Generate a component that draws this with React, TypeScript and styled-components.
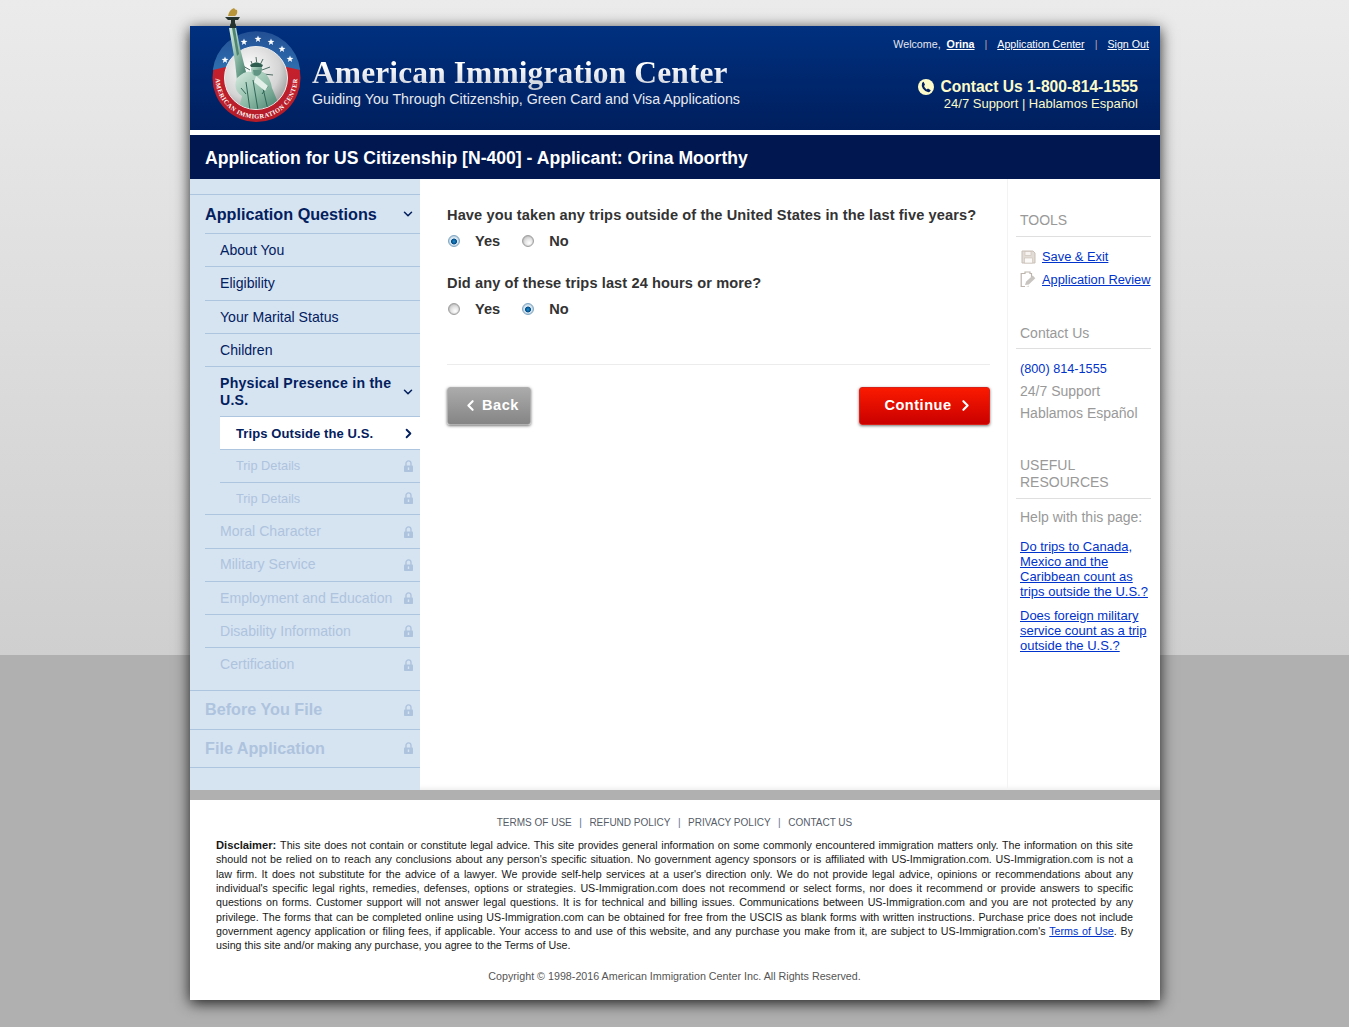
import React from "react";
import styled, { createGlobalStyle } from "styled-components";
import { ChevronDown, ChevronRight, ChevronLeft } from "lucide-react";

const Global = createGlobalStyle`
  html, body { margin: 0; padding: 0; }
  body {
    min-height: 1027px;
    font-family: "Liberation Sans", Arial, sans-serif;
    background: linear-gradient(to bottom, #ebebeb 0, #cfcfcf 655px, #b0b0b0 655px, #b0b0b0 100%);
  }
`;

const Page = styled.div`
  width: 970px;
  margin-left: 190px;
  padding-top: 26px;
`;
const Sheet = styled.div`
  box-shadow: 0 3px 14px rgba(0, 0, 0, 0.85);
`;
const Header = styled.header`
  height: 104px;
  display: flex;
  background: linear-gradient(to bottom, #00307f 0, #001f5e 100%);
  border-bottom: 5px solid #fff;
`;
const LogoBox = styled.div`
  width: 122px;
  flex: none;
  position: relative;
`;
const LogoSvg = styled.svg`
  position: absolute;
  left: 20px;
  top: -22px;
`;
const Brand = styled.div`
  padding-top: 29px;
  flex: 1;
`;
const BrandName = styled.div`
  font-family: "Liberation Serif", "Times New Roman", serif;
  font-weight: 700;
  font-size: 31.5px;
  line-height: 36px;
  letter-spacing: 0.1px;
  background: linear-gradient(to bottom, #ffffff 30%, #c9ced8 90%);
  -webkit-background-clip: text;
  background-clip: text;
  color: transparent;
  white-space: nowrap;
`;
const BrandTag = styled.div`
  font-size: 14.22px;
  line-height: 16px;
  color: #e6e9ef;
  white-space: nowrap;
`;
const HeaderRight = styled.div`
  flex: none;
  padding: 12px 11px 0 0;
  display: flex;
  flex-direction: column;
  align-items: flex-end;
`;
const TopLinks = styled.div`
  display: flex;
  align-items: center;
  font-size: 10.7px;
  line-height: 13px;
  color: #e4e6ee;
`;
const TopLink = styled.a<{ $bold?: boolean }>`
  color: #fff;
  text-decoration: underline;
  font-weight: ${(p) => (p.$bold ? 700 : 400)};
  cursor: pointer;
`;
const TopSep = styled.span`
  color: #b9a0a0;
  margin: 0 10px;
`;
const ContactBlock = styled.div`
  margin: 26px 11px 0 0;
  text-align: right;
  color: #fcfbc9;
`;
const ContactMain = styled.div`
  display: flex;
  align-items: center;
  justify-content: flex-end;
  gap: 6px;
  font-size: 15.6px;
  line-height: 20px;
  font-weight: 700;
`;
const ContactSub = styled.div`
  font-size: 13px;
  line-height: 15px;
  margin-top: -1px;
`;
const TitleBar = styled.div`
  height: 44px;
  background: #01174f;
  display: flex;
  align-items: center;
  padding-left: 15px;
  padding-top: 2px;
  box-sizing: border-box;
  color: #fff;
  font-size: 17.6px;
  font-weight: 700;
`;
const Body = styled.div`
  display: flex;
  height: 611px;
  background: #fff;
  box-shadow: inset 0 -6px 6px -6px rgba(0, 0, 0, 0.12);
`;
const Nav = styled.nav`
  width: 230px;
  flex: none;
  box-sizing: border-box;
  padding-top: 15px;
  background: #d6e4f2;
  color: #03205e;
`;
const NavHead = styled.div<{ $locked?: boolean; $end?: boolean }>`
  height: 39px;
  box-sizing: border-box;
  display: flex;
  align-items: center;
  justify-content: space-between;
  padding: 0 7.5px 0 15px;
  border-top: 1px solid #aec5e0;
  border-bottom: ${(p) => (p.$end ? "1px solid #aec5e0" : "0")};
  font-size: 16.2px;
  font-weight: 700;
  color: ${(p) => (p.$locked ? "#aec3dd" : "#03205e")};
`;
const NavGroup = styled.div`
  padding-left: 15px;
`;
const NavRow = styled.div<{ $locked?: boolean; $open?: boolean }>`
  min-height: ${(p) => (p.$open ? "50px" : "33.25px")};
  box-sizing: border-box;
  display: flex;
  align-items: center;
  justify-content: space-between;
  padding: ${(p) => (p.$locked || p.$open ? "0 7.5px 0 15px" : "1px 7.5px 0 15px")};
  border-top: 1px solid #aec5e0;
  font-size: 14.1px;
  line-height: 17px;
  font-weight: ${(p) => (p.$open ? 700 : 400)};
  letter-spacing: ${(p) => (p.$open ? "0.25px" : "0")};
  color: ${(p) => (p.$locked ? "#aec3dd" : "#03205e")};
`;
const TwoLine = styled.span`
  display: block;
  width: 180px;
`;
const SubGroup = styled.div`
  padding-left: 15px;
`;
const SubRow = styled.div<{ $active?: boolean }>`
  height: 32.8px;
  box-sizing: border-box;
  display: flex;
  align-items: center;
  justify-content: space-between;
  padding: ${(p) => (p.$active ? "1px" : "0")} 7.5px 0 16px;
  border-top: 1px solid #aec5e0;
  font-size: ${(p) => (p.$active ? "13px" : "12.8px")};
  font-weight: ${(p) => (p.$active ? 700 : 400)};
  letter-spacing: ${(p) => (p.$active ? "0.1px" : "0")};
  color: ${(p) => (p.$active ? "#03205e" : "#aec3dd")};
  background: ${(p) => (p.$active ? "#fff" : "transparent")};
`;
const NavDown = styled(ChevronDown)`
  flex: none;
  margin-right: -2.5px;
`;
const NavNext = styled(ChevronRight)`
  flex: none;
  margin-right: -3px;
`;
const NavSpacer = styled.div`
  height: 9px;
`;
const Main = styled.main`
  flex: 1;
  box-sizing: border-box;
  padding: 26px 17px 0 27px;
`;
const Question = styled.div`
  font-size: 14.6px;
  line-height: 20px;
  font-weight: 700;
  color: #333;
  letter-spacing: 0.1px;
`;
const Choices = styled.div`
  display: flex;
  align-items: center;
  height: 20px;
  margin: 6px 0 22px;
`;
const Choice = styled.label`
  display: flex;
  align-items: center;
  font-size: 14.6px;
  font-weight: 700;
  color: #333;
  margin-right: 21px;
`;
const Radio = styled.span<{ $on?: boolean }>`
  width: 12px;
  height: 12px;
  margin: 0 15px 1px 1px;
  border-radius: 50%;
  box-sizing: border-box;
  border: 1px solid ${(p) => (p.$on ? "#7fa6c4" : "#a0a0a0")};
  box-shadow: inset 0 0 1px rgba(0, 0, 0, 0.35);
  background: ${(p) =>
    p.$on
      ? "radial-gradient(circle at 50% 55%, #1c8fd0 0, #034a86 2.6px, #dcebf6 3.3px, #b9d2e6 100%)"
      : "radial-gradient(circle at 62% 70%, #ffffff 0, #e6e6e6 40%, #b4b4b4 100%)"};
`;
const Divider = styled.div`
  border-top: 1px solid #ececec;
  margin-top: 45px;
`;
const Actions = styled.div`
  display: flex;
  justify-content: space-between;
  margin-top: 22px;
`;
const Button = styled.button<{ $primary?: boolean }>`
  height: 38px;
  padding: 0 0 2px ${(p) => (p.$primary ? "9px" : "3px")};
  width: ${(p) => (p.$primary ? "131px" : "84px")};
  display: flex;
  align-items: center;
  justify-content: center;
  gap: ${(p) => (p.$primary ? "5px" : "3px")};
  border-radius: 3px;
  border: 1px solid ${(p) => (p.$primary ? "#d82018" : "#b0b0b0")};
  box-shadow: 0 1px 3px rgba(0, 0, 0, 0.55);
  background: ${(p) =>
    p.$primary
      ? "linear-gradient(to bottom, #fa1a00 0, #ca0000 100%)"
      : "linear-gradient(to bottom, #ababab 0, #858585 100%)"};
  color: #fff;
  font-family: "Liberation Sans", Arial, sans-serif;
  font-size: 14.6px;
  font-weight: 700;
  letter-spacing: 0.5px;
`;
const Aside = styled.aside`
  width: 153px;
  flex: none;
  box-sizing: border-box;
  border-left: 1px solid #f3f3f3;
  padding: 33px 9px 0 8px;
  font-size: 14px;
  color: #999;
`;
const AsideTitle = styled.div<{ $gap?: number; $tight?: boolean }>`
  margin-top: ${(p) => p.$gap ?? 0}px;
  padding: 0 0 ${(p) => (p.$tight ? 6 : 7)}px 4px;
  line-height: 17px;
  border-bottom: 1px solid #dfdfdf;
`;
const ToolRow = styled.div`
  display: flex;
  align-items: center;
  height: 23px;
  white-space: nowrap;
  padding-left: 4px;
  margin-right: -2px;
  gap: 6px;
  font-size: 12.85px;
  svg { flex: none; }
`;
const ToolList = styled.div`
  padding-top: 8px;
`;
const Link = styled.a`
  color: #0033cc;
  text-decoration: underline;
  cursor: pointer;
`;
const Phone = styled.div`
  padding: 9px 0 0 4px;
  line-height: 22px;
  font-size: 12.7px;
  color: #0033cc;
`;
const AsideText = styled.div`
  padding-left: 4px;
  line-height: 22px;
`;
const HelpLabel = styled.div`
  padding: 8px 0 12px 4px;
  line-height: 20px;
`;
const HelpLink = styled.div`
  padding-left: 4px;
  margin-right: -2px;
  margin-bottom: 9px;
  font-size: 13px;
  line-height: 15px;
`;
const Footer = styled.footer`
  height: 200px;
  box-sizing: border-box;
  background: #fff;
  padding: 16px 27px 0 26px;
`;
const FooterLinks = styled.div`
  display: flex;
  justify-content: center;
  font-size: 10px;
  line-height: 14px;
  color: #555c68;
`;
const FooterSep = styled.span`
  margin: 0 7.5px;
  color: #5b6e90;
`;
const Disclaimer = styled.div`
  margin-top: 8px;
  font-size: 10.7px;
  line-height: 14.35px;
  color: #181818;
  b { font-size: 11.2px; }
`;
const DLine = styled.div<{ $last?: boolean }>`
  text-align: justify;
  text-align-last: ${(p) => (p.$last ? "left" : "justify")};
  white-space: nowrap;
`;
const Copyright = styled.div`
  margin-top: 16px;
  text-align: center;
  font-size: 10.73px;
  line-height: 14px;
  color: #555;
`;
const Shim = styled.div`
  height: 10px;
`;

const Lock = () => (
  <svg width="9" height="12" viewBox="0 0 9 12">
    <path d="M2 6V3.4a2.5 2.5 0 0 1 5 0V6" fill="none" stroke="#aec3dd" strokeWidth="1.4" />
    <rect x="0" y="5.4" width="9" height="6.6" rx="0.8" fill="#aec3dd" />
    <rect x="3.8" y="7.4" width="1.4" height="2.6" fill="#d6e4f2" />
  </svg>
);

const SaveIcon = () => (
  <svg width="16" height="16" viewBox="0 0 16 16">
    <path d="M2 2h11l2 2v10H2z" fill="#e2dcd6" stroke="#c9bfb5" />
    <rect x="5" y="2.5" width="6" height="4" fill="#f6f3f0" stroke="#c9bfb5" strokeWidth="0.6" />
    <rect x="4.5" y="9" width="8" height="5" fill="#fbfaf8" stroke="#c9bfb5" strokeWidth="0.6" />
  </svg>
);
const ReviewIcon = () => (
  <svg width="16" height="17" viewBox="0 0 16 17">
    <path d="M4 2.5h1V1h5v1.5h1.5V6M4 2.5H1.2v13H5" fill="none" stroke="#bdb5ad" strokeWidth="1.2" />
    <path d="M5 14l1.2-3.4 6.5-6 2.6 2.6-6.5 6.2z" fill="#c8c4c0" />
    <path d="M9 16h-3l3-1.5z" fill="#dedbd8" />
  </svg>
);

const Star = ({ x, y, r = 4 }: { x: number; y: number; r?: number }) => {
  const pts: string[] = [];
  for (let i = 0; i < 10; i++) {
    const a = -Math.PI / 2 + (i * Math.PI) / 5;
    const d = i % 2 === 0 ? r : r * 0.42;
    pts.push(`${(x + d * Math.cos(a)).toFixed(2)},${(y + d * Math.sin(a)).toFixed(2)}`);
  }
  return <polygon points={pts.join(" ")} fill="#fff" />;
};

const Logo = () => (
  <LogoSvg width="96" height="126" viewBox="0 0 96 126">
    <defs>
      <clipPath id="innerClip"><circle cx="46" cy="74" r="31" /></clipPath>
      <linearGradient id="blueRing" x1="0" y1="0" x2="0" y2="1">
        <stop offset="0" stopColor="#234f94" />
        <stop offset="1" stopColor="#2e6fb0" />
      </linearGradient>
      <linearGradient id="redRing" x1="0" y1="0" x2="0" y2="1">
        <stop offset="0" stopColor="#cf2430" />
        <stop offset="1" stopColor="#b41c28" />
      </linearGradient>
      <radialGradient id="inner" cx="0.4" cy="0.35" r="0.8">
        <stop offset="0" stopColor="#ffffff" />
        <stop offset="0.6" stopColor="#d4d4d4" />
        <stop offset="1" stopColor="#7e7e7e" />
      </radialGradient>
      <linearGradient id="robe" x1="0" y1="0" x2="1" y2="1">
        <stop offset="0" stopColor="#d8ece2" />
        <stop offset="0.5" stopColor="#8dbba7" />
        <stop offset="1" stopColor="#3a7563" />
      </linearGradient>
      <path id="ringText" d="M7.8 60 A41 41 0 1 0 85.2 60" fill="none" />
    </defs>
    <circle cx="46.5" cy="74" r="44" fill="url(#redRing)" />
    <path d="M2.8 66 A44 44 0 0 1 90.2 66 Q46 54 2.8 66Z" fill="url(#blueRing)" />
    <circle cx="46" cy="74" r="31.5" fill="url(#inner)" stroke="#eeeeee" strokeWidth="1" />
    <Star x={15} y={56} r={3.6} />
    <Star x={34} y={38} r={3.6} />
    <Star x={48} y={35} r={3.6} />
    <Star x={61} y={38} r={3.6} />
    <Star x={72} y={45} r={3.6} />
    <Star x={80} y={55} r={3.6} />
    <text fontFamily="'Liberation Serif', serif" fontSize="6.4" fontWeight="700" fill="#fff" textAnchor="middle" letterSpacing="0.5">
      <textPath href="#ringText" startOffset="50%">AMERICAN IMMIGRATION CENTER</textPath>
    </text>
    <path d="M41 57 l2 5 M46 53 l1 8 M53 55 l-3 6 M60 63 l-8 3 M63 71 l-10 -1 M33 62 l7 4 M30 70 l9 0" stroke="#4c6a62" strokeWidth="1" />
    <path d="M19 24 L26 23 L30 44 L34 60 L37 72 L27 76 L25 58 Z" fill="url(#robe)" />
    <path d="M22 24 L25 24 L29 50 L27 52 Z" fill="#4f8471" />
    <path d="M15 13 h15 l-2 3 h-3 v3 l1 2 v3 h-6 v-3 l1 -2 v-3 h-3 z" fill="#25332f" />
    <path d="M18 12 q1 -6 6 -8 q1 2 3 2 q1 4 -2 6 z" fill="#b9953a" />
    <g clipPath="url(#innerClip)">
      <path d="M27 74 Q36 66 41 68 L53 68 Q60 72 62 84 L72 108 L28 108 L32 92 Q22 86 27 74 Z" fill="url(#robe)" />
      <path d="M36 78 L40 106 M43 76 L48 106 M52 80 L58 106 M31 84 L36 90 M58 82 L52 90" stroke="#2f6655" strokeWidth="1" fill="none" />
      <path d="M46 72 L58 82 L55 87 L44 78 Z" fill="#e2f0e9" />
    </g>
    <ellipse cx="46.5" cy="65" rx="5.5" ry="7" fill="url(#robe)" />
    <path d="M40 61 q6.5 -5 13 0 l-1 2 h-11 z" fill="#2f5e50" />
    <path d="M43 66 h7 l-1 5 h-5 z" fill="#5f9582" />
  </LogoSvg>
);

const PhoneGlyph = () => (
  <svg width="16" height="16" viewBox="0 0 16 16">
    <circle cx="8" cy="8" r="8" fill="#fcfbc9" />
    <path d="M5.6 2.8 L7 5.8 L6 7 Q6.6 9 8.6 10.4 L10 9.4 L12.8 11.2 Q12 13 10.4 13.2 Q7 12.8 4.8 9.6 Q3.2 6.4 4 4.2 Q4.6 3 5.6 2.8 Z" fill="#052060" />
  </svg>
);

const disclaimerLines = [
  "This site does not contain or constitute legal advice. This site provides general information on some commonly encountered immigration matters only. The information on this site",
  "should not be relied on to reach any conclusions about any person's specific situation. No government agency sponsors or is affiliated with US-Immigration.com. US-Immigration.com is not a",
  "law firm. It does not substitute for the advice of a lawyer. We provide self-help services at a user's direction only. We do not provide legal advice, opinions or recommendations about any",
  "individual's specific legal rights, remedies, defenses, options or strategies. US-Immigration.com does not recommend or select forms, nor does it recommend or provide answers to specific",
  "questions on forms. Customer support will not answer legal questions. It is for technical and billing issues. Communications between US-Immigration.com and you are not protected by any",
  "privilege. The forms that can be completed online using US-Immigration.com can be obtained for free from the USCIS as blank forms with written instructions. Purchase price does not include",
];

export default function App() {
  return (
    <>
      <Global />
      <Page>
        <Sheet>
          <Header>
            <LogoBox><Logo /></LogoBox>
            <Brand>
              <BrandName>American Immigration Center</BrandName>
              <BrandTag>Guiding You Through Citizenship, Green Card and Visa Applications</BrandTag>
            </Brand>
            <HeaderRight>
              <TopLinks>
                Welcome,&nbsp;&nbsp;<TopLink $bold>Orina</TopLink>
                <TopSep>|</TopSep>
                <TopLink>Application Center</TopLink>
                <TopSep>|</TopSep>
                <TopLink>Sign Out</TopLink>
              </TopLinks>
              <ContactBlock>
                <ContactMain><PhoneGlyph />Contact Us 1-800-814-1555</ContactMain>
                <ContactSub>24/7 Support | Hablamos Español</ContactSub>
              </ContactBlock>
            </HeaderRight>
          </Header>
          <TitleBar>Application for US Citizenship [N-400] - Applicant: Orina Moorthy</TitleBar>
          <Body>
            <Nav>
              <NavHead>Application Questions <NavDown size={14} strokeWidth={2.6} /></NavHead>
              <NavGroup>
                <NavRow>About You</NavRow>
                <NavRow>Eligibility</NavRow>
                <NavRow>Your Marital Status</NavRow>
                <NavRow>Children</NavRow>
                <NavRow $open>
                  <TwoLine>Physical Presence in the U.S.</TwoLine>
                  <NavDown size={14} strokeWidth={2.6} />
                </NavRow>
                <SubGroup>
                  <SubRow $active>Trips Outside the U.S. <NavNext size={15} strokeWidth={3} /></SubRow>
                  <SubRow>Trip Details <Lock /></SubRow>
                  <SubRow>Trip Details <Lock /></SubRow>
                </SubGroup>
                <NavRow $locked>Moral Character <Lock /></NavRow>
                <NavRow $locked>Military Service <Lock /></NavRow>
                <NavRow $locked>Employment and Education <Lock /></NavRow>
                <NavRow $locked>Disability Information <Lock /></NavRow>
                <NavRow $locked>Certification <Lock /></NavRow>
              </NavGroup>
              <NavSpacer />
              <NavHead $locked>Before You File <Lock /></NavHead>
              <NavHead $locked $end>File Application <Lock /></NavHead>
            </Nav>
            <Main>
              <Question>Have you taken any trips outside of the United States in the last five years?</Question>
              <Choices>
                <Choice><Radio $on />Yes</Choice>
                <Choice><Radio />No</Choice>
              </Choices>
              <Question>Did any of these trips last 24 hours or more?</Question>
              <Choices>
                <Choice><Radio />Yes</Choice>
                <Choice><Radio $on />No</Choice>
              </Choices>
              <Divider />
              <Actions>
                <Button><ChevronLeft size={17} strokeWidth={3} />Back</Button>
                <Button $primary>Continue<ChevronRight size={17} strokeWidth={3} /></Button>
              </Actions>
            </Main>
            <Aside>
              <AsideTitle>TOOLS</AsideTitle>
              <ToolList>
                <ToolRow><SaveIcon /><Link>Save &amp; Exit</Link></ToolRow>
                <ToolRow><ReviewIcon /><Link>Application Review</Link></ToolRow>
              </ToolList>
              <AsideTitle $gap={34} $tight>Contact Us</AsideTitle>
              <Phone>(800) 814-1555</Phone>
              <AsideText>24/7 Support</AsideText>
              <AsideText>Hablamos Español</AsideText>
              <AsideTitle $gap={33}>USEFUL<br />RESOURCES</AsideTitle>
              <HelpLabel>Help with this page:</HelpLabel>
              <HelpLink><Link>Do trips to Canada, Mexico and the Caribbean count as trips outside the U.S.?</Link></HelpLink>
              <HelpLink><Link>Does foreign military service count as a trip outside the U.S.?</Link></HelpLink>
            </Aside>
          </Body>
          <Shim />
          <Footer>
            <FooterLinks>
              TERMS OF USE<FooterSep>|</FooterSep>REFUND POLICY<FooterSep>|</FooterSep>PRIVACY POLICY<FooterSep>|</FooterSep>CONTACT US
            </FooterLinks>
            <Disclaimer>
              {disclaimerLines.map((line, i) => (
                <DLine key={i}>{i === 0 && <b>Disclaimer: </b>}{line}</DLine>
              ))}
              <DLine>government agency application or filing fees, if applicable. Your access to and use of this website, and any purchase you make from it, are subject to US-Immigration.com's <Link>Terms of Use</Link>. By</DLine>
              <DLine $last>using this site and/or making any purchase, you agree to the Terms of Use.</DLine>
            </Disclaimer>
            <Copyright>Copyright © 1998-2016 American Immigration Center Inc. All Rights Reserved.</Copyright>
          </Footer>
        </Sheet>
      </Page>
    </>
  );
}
